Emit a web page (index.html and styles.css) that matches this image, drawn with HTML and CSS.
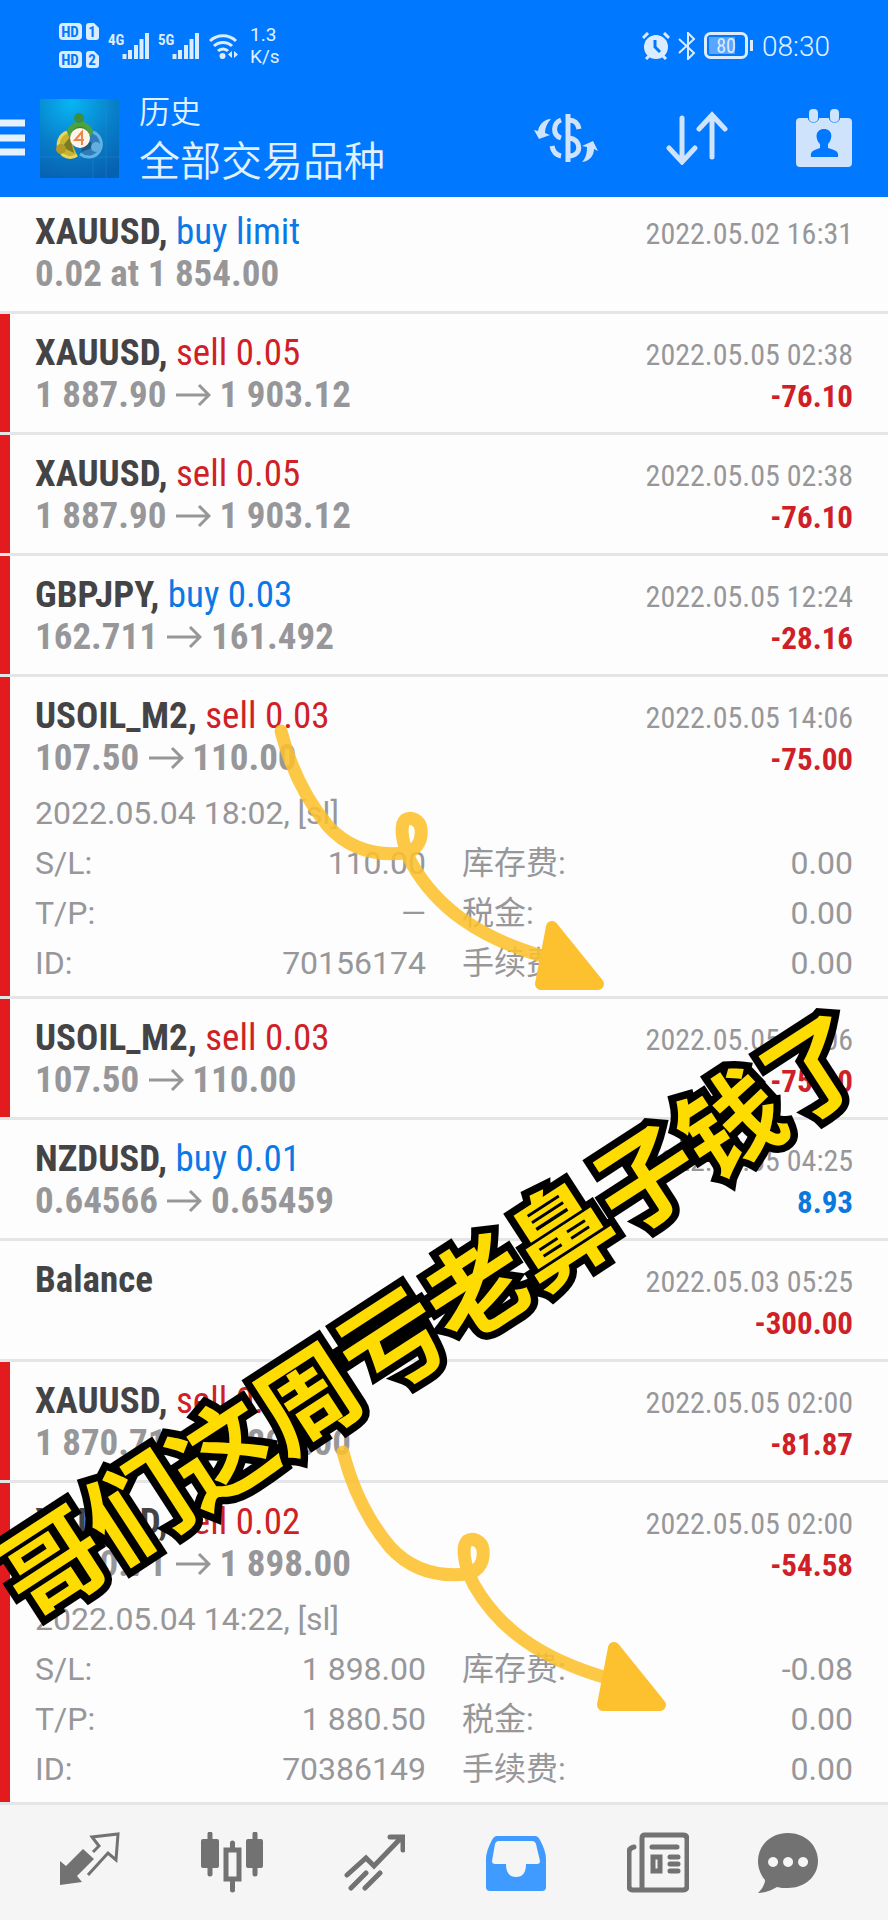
FILE: index.html
```html
<!DOCTYPE html>
<html lang="zh-CN">
<head>
<meta charset="utf-8">
<meta name="viewport" content="width=device-width, initial-scale=1">
<title>历史 - 全部交易品种</title>
<link rel="stylesheet" href="styles.css">
</head>
<body>
<div class="page">
  <header class="top">
    <div class="status">
      <svg class="status-hd" viewBox="0 0 42 48" aria-hidden="true">
        <rect x="1" y="1" width="23" height="17" rx="4"/><path d="M31 1h5l5 5v9a3 3 0 0 1-3 3h-7a3 3 0 0 1-3-3V4a3 3 0 0 1 3-3z"/>
        <rect x="1" y="29" width="23" height="17" rx="4"/><path d="M31 29h5l5 5v9a3 3 0 0 1-3 3h-7a3 3 0 0 1-3-3V32a3 3 0 0 1 3-3z"/>
        <text x="12" y="15">HD</text><text x="34" y="15">1</text>
        <text x="12" y="43">HD</text><text x="34" y="43">2</text>
      </svg>
      <svg class="status-signal" viewBox="0 0 42 30" aria-hidden="true">
        <text x="0" y="14">4G</text>
        <path d="M16.500 28v-5M22 28v-9M28 28v-14M33.500 28v-20M39 28V2"/>
      </svg>
      <svg class="status-signal" viewBox="0 0 42 30" aria-hidden="true">
        <text x="0" y="14">5G</text>
        <path d="M16.500 28v-5M22 28v-9M28 28v-14M33.500 28v-20M39 28V2"/>
      </svg>
      <svg class="status-wifi" viewBox="0 0 32 28" aria-hidden="true">
        <path d="M2 9a19 19 0 0 1 26 0M6 14a13 13 0 0 1 18 0M10 19a7 7 0 0 1 10 0"/>
        <circle cx="14.500" cy="24" r="3"/><path class="solid" d="M24 19v7l-4-3.500zM26 19v7l4-3.500z"/>
      </svg>
      <span class="speed">1.3<br>K/s</span>
      <span class="spacer"></span>
      <svg class="status-alarm" viewBox="0 0 28 28" aria-hidden="true">
        <circle class="solid" cx="14" cy="15" r="12"/>
        <path d="M1 6l5-5M27 6l-5-5M4 27l4-4M24 27l-4-4"/><path class="hand" d="M13 8v7l5 5"/>
      </svg>
      <svg class="status-bt" viewBox="0 0 18 28" aria-hidden="true"><path d="M1 7l15 14-6 6V1l6 6L1 21"/></svg>
      <svg class="status-battery" viewBox="0 0 50 28" aria-hidden="true">
        <rect x="1.500" y="1.500" width="41" height="24" rx="5"/><rect class="level" x="5" y="5" width="26" height="17"/>
        <path d="M47.500 8v11"/><text x="22" y="21">80</text>
      </svg>
      <time class="clock">08:30</time>
    </div>
    <div class="bar">
      <button class="icon-btn" aria-label="菜单">
        <svg class="i-menu" viewBox="0 0 25 38"><path d="M0 4h25M0 19h25M0 33h25"/></svg>
      </button>
      <svg class="logo" viewBox="0 0 79 79" role="img" aria-label="MetaTrader 4">
        <defs>
          <radialGradient id="sky" cx=".4" cy=".05" r="1"><stop offset="0" stop-color="#08b5f3"/><stop offset=".55" stop-color="#087fc9"/><stop offset="1" stop-color="#0761b2"/></radialGradient>
        </defs>
        <rect width="79" height="79" fill="url(#sky)"/>
        <path d="M0 58h79M53 20v59M66 0v79" stroke="#2a8fd2" stroke-width="1" opacity=".4"/>
        <path d="M29 36a11 11 0 1 1 22 0l-3 5H32z" fill="#328b35" stroke="#4da23f" stroke-width="5"/>
        <path d="M27 33c-8 3-11 12-7 19 3 6 11 9 17 4" fill="#c9b332" stroke="#e6d65b" stroke-width="3"/>
        <path d="M53 33c8 3 10 12 7 18-4 8-13 9-20 4" fill="#2d7dbb" stroke="#63b2e4" stroke-width="3"/>
        <path d="M22 48l8-10 4 16z" fill="#7d7a22"/><path d="M55 48l-9-10-5 15z" fill="#195b83"/>
        <circle cx="39" cy="19" r="5" fill="#3b8f41"/><circle cx="21" cy="50" r="5" fill="#b49b28"/><circle cx="56" cy="48" r="5" fill="#63aee0"/>
        <circle cx="40" cy="39" r="10" fill="#fff3ec"/>
        <path d="M42 46V33l-7 8h9" fill="none" stroke="#ee8647" stroke-width="2"/>
      </svg>
      <h1 class="titles"><span class="title-small">历史</span><span class="title-main">全部交易品种</span></h1>
      <div class="actions">
        <button class="icon-btn" aria-label="货币">
          <svg class="i-currency" viewBox="0 0 64 50">
            <path d="M34 1v48M27 7c-8 3-9 15 0 18M18 33c1 5 4 9 9 10M35 7c5 0 9 3 10 9M35 25c13 1 13 18 0 18"/>
            <path class="solid" d="M17 6C10 6 5 12 4 18L0 17l5 9 11-4-5-2c0-5 2-10 6-14zM48 49c8-1 12-7 12-13l4 2-5-10-11 5 5 1c0 6-1 11-5 15z"/>
          </svg>
        </button>
        <button class="icon-btn" aria-label="排序">
          <svg class="i-sort" viewBox="0 0 62 54"><path d="M16 7v43M3 37l13 14 13-14M46 46V4M33 18L46 4l13 14"/></svg>
        </button>
        <button class="icon-btn" aria-label="时间段">
          <svg class="i-calendar" viewBox="0 0 56 58">
            <path fill-rule="evenodd" d="M4 9h8v1a6 6 0 0 0 11 0V9h10v1a6 6 0 0 0 11 0V9h8a4 4 0 0 1 4 4v41a4 4 0 0 1-4 4H4a4 4 0 0 1-4-4V13a4 4 0 0 1 4-4zM15 48h27c1-6-3-7-10-9v-4c5-5 5-15-4-15s-9 10-4 15v4c-6 2-10 3-9 9z"/>
            <rect x="13" y="0" width="9" height="13" rx="4"/><rect x="34" y="0" width="9" height="13" rx="4"/>
          </svg>
        </button>
      </div>
    </div>
  </header>

  <svg class="defs" width="0" height="0" aria-hidden="true">
    <symbol id="to" viewBox="0 0 36 24"><path d="M1 12h33M24 2l10 10-10 10" fill="none" stroke="currentColor" stroke-width="3"/></symbol>
  </svg>

  <main class="deals">
    <article class="deal first">
      <div class="line"><h2 class="name">XAUUSD, <span class="buy">buy limit</span></h2><time class="date">2022.05.02 16:31</time></div>
      <div class="line"><span class="price">0.02 at 1 854.00</span></div>
    </article>
    <article class="deal loss">
      <div class="line"><h2 class="name">XAUUSD, <span class="sell">sell 0.05</span></h2><time class="date">2022.05.05 02:38</time></div>
      <div class="line"><span class="price">1 887.90 <svg class="to"><use href="#to"/></svg> 1 903.12</span><span class="profit">-76.10</span></div>
    </article>
    <article class="deal loss">
      <div class="line"><h2 class="name">XAUUSD, <span class="sell">sell 0.05</span></h2><time class="date">2022.05.05 02:38</time></div>
      <div class="line"><span class="price">1 887.90 <svg class="to"><use href="#to"/></svg> 1 903.12</span><span class="profit">-76.10</span></div>
    </article>
    <article class="deal loss">
      <div class="line"><h2 class="name">GBPJPY, <span class="buy">buy 0.03</span></h2><time class="date">2022.05.05 12:24</time></div>
      <div class="line"><span class="price">162.711 <svg class="to"><use href="#to"/></svg> 161.492</span><span class="profit">-28.16</span></div>
    </article>
    <article class="deal loss open">
      <div class="line"><h2 class="name">USOIL_M2, <span class="sell">sell 0.03</span></h2><time class="date">2022.05.05 14:06</time></div>
      <div class="line"><span class="price">107.50 <svg class="to"><use href="#to"/></svg> 110.00</span><span class="profit">-75.00</span></div>
      <div class="details">
        <p class="opened">2022.05.04 18:02, [sl]</p>
        <dl class="facts">
          <div><dt>S/L:</dt><dd>110.00</dd></div><div><dt>库存费:</dt><dd>0.00</dd></div>
          <div><dt>T/P:</dt><dd>—</dd></div><div><dt>税金:</dt><dd>0.00</dd></div>
          <div><dt>ID:</dt><dd>70156174</dd></div><div><dt>手续费:</dt><dd>0.00</dd></div>
        </dl>
      </div>
    </article>
    <article class="deal loss">
      <div class="line"><h2 class="name">USOIL_M2, <span class="sell">sell 0.03</span></h2><time class="date">2022.05.05 14:06</time></div>
      <div class="line"><span class="price">107.50 <svg class="to"><use href="#to"/></svg> 110.00</span><span class="profit">-75.00</span></div>
    </article>
    <article class="deal">
      <div class="line"><h2 class="name">NZDUSD, <span class="buy">buy 0.01</span></h2><time class="date">2022.05.05 04:25</time></div>
      <div class="line"><span class="price">0.64566 <svg class="to"><use href="#to"/></svg> 0.65459</span><span class="profit gain">8.93</span></div>
    </article>
    <article class="deal">
      <div class="line"><h2 class="name">Balance</h2><time class="date">2022.05.03 05:25</time></div>
      <div class="line"><span class="price">&nbsp;</span><span class="profit">-300.00</span></div>
    </article>
    <article class="deal loss">
      <div class="line"><h2 class="name">XAUUSD, <span class="sell">sell 0.03</span></h2><time class="date">2022.05.05 02:00</time></div>
      <div class="line"><span class="price">1 870.71 <svg class="to"><use href="#to"/></svg> 1 898.00</span><span class="profit">-81.87</span></div>
    </article>
    <article class="deal loss open">
      <div class="line"><h2 class="name">XAUUSD, <span class="sell">sell 0.02</span></h2><time class="date">2022.05.05 02:00</time></div>
      <div class="line"><span class="price">1 870.71 <svg class="to"><use href="#to"/></svg> 1 898.00</span><span class="profit">-54.58</span></div>
      <div class="details">
        <p class="opened">2022.05.04 14:22, [sl]</p>
        <dl class="facts">
          <div><dt>S/L:</dt><dd>1 898.00</dd></div><div><dt>库存费:</dt><dd>-0.08</dd></div>
          <div><dt>T/P:</dt><dd>1 880.50</dd></div><div><dt>税金:</dt><dd>0.00</dd></div>
          <div><dt>ID:</dt><dd>70386149</dd></div><div><dt>手续费:</dt><dd>0.00</dd></div>
        </dl>
      </div>
    </article>
  </main>

  <nav class="tabs" aria-label="主导航">
    <button class="tab" aria-label="行情"><svg viewBox="0 0 62 62">
      <path class="solid" d="M1 29l6 5 17-17 11 10-17 17 5 6-22 3z"/>
      <path d="M34 19l6-6-7-9 26-3-2 26-8-7-20 22" transform="translate(0 1)"/>
    </svg></button>
    <button class="tab" aria-label="图表"><svg viewBox="0 0 62 62">
      <rect class="solid" x="0" y="7" width="18" height="29" rx="2"/><rect class="solid" x="45" y="7" width="17" height="29" rx="2"/>
      <path class="thick" d="M9 2v40M54 2v40M31.500 11v7M31.500 48v10M25 18h13v29H25z"/>
    </svg></button>
    <button class="tab" aria-label="交易"><svg viewBox="0 0 62 62">
      <path class="thick" d="M4 43l19-17 8 8L58 6M47 5h13v13M8 56l15-15M22 56l15-15"/>
    </svg></button>
    <button class="tab active" aria-label="历史"><svg viewBox="0 0 62 62">
      <path class="solid" fill-rule="evenodd" d="M12 4h38q3 0 5 4 6 11 6 19v28q0 4-4 4H5q-4 0-4-4V27Q1 19 7 8q2-4 5-4zm2 5q-3 0-4 3L7 29q0 3 3 3h11q0 13 10 13t10-13h11q3 0 3-3l-4-17q-1-3-4-3z"/>
    </svg></button>
    <button class="tab" aria-label="新闻"><svg viewBox="0 0 62 62">
      <path class="thick" d="M15 58V6q0-3 3-3h38q4 0 4 4v47q0 4-4 4H6q-4 0-4-4V20q0-4 5-5M25 15h25M43 25h8M43 32h8M43 39h8"/>
      <path class="thick" d="M26 25h7v14h-7z"/>
    </svg></button>
    <button class="tab" aria-label="消息"><svg viewBox="0 0 62 62">
      <path class="solid" fill-rule="evenodd" d="M31 1c17 0 30 12 30 28S47 56 31 56c-4 0-8 0-11-1-5 3-12 6-19 6 4-4 7-9 7-13C4 43 1 37 1 29 1 13 14 1 31 1zM16 25a5 5 0 1 0 .1 0zM31 25a5 5 0 1 0 .1 0zM46 25a5 5 0 1 0 .1 0z"/>
    </svg></button>
  </nav>

  <svg class="scribbles" viewBox="0 0 888 1920" aria-hidden="true">
    <g id="swoop">
      <path class="tail" d="M281 731C289 762 303 796 328 826C350 850 378 856 405 853C419 850 422 838 421 829C420 820 411 816 405 820C400 825 401 843 412 864C436 906 476 937 545 957"/>
      <path class="head" d="M552 927L541 984L598 984Z"/>
    </g>
    <use href="#swoop" x="62" y="721"/>
  </svg>
  <p class="caption">哥们这周亏老鼻子钱了</p>
</div>
</body>
</html>
```

FILE: styles.css
```css
* { box-sizing: border-box; }

body {
  margin: 0;
  background: #fdfdfd;
  font-family: Roboto, "Noto Sans CJK SC", sans-serif;
  color: #97979a;
}

h1, h2, p, dl, dd { margin: 0; font-weight: 400; }

button { border: 0; padding: 0; background: none; color: inherit; font: inherit; }

svg { display: block; }

.defs { position: absolute; }

.page {
  position: relative;
  display: flex;
  flex-direction: column;
  min-height: 100vh;
  overflow: hidden;
}

/* Header */

.top {
  background: #0078ff;
  color: #e2f1ff;
  height: 197px;
}

.status {
  display: flex;
  align-items: center;
  gap: 8px;
  height: 92px;
  padding: 0 58px;
}

.status svg { flex: none; fill: none; stroke: #dcecff; stroke-width: 3; }
.status .solid { fill: #dcecff; stroke: none; }
.status text { stroke: none; fill: #dcecff; font-family: "Roboto Condensed", "Liberation Sans Narrow", Roboto, sans-serif; font-weight: 700; }

.status .status-hd { width: 42px; height: 48px; fill: #dcecff; stroke: none; }
.status .status-hd text { fill: #0078ff; font-size: 15px; text-anchor: middle; }
.status .status-signal { width: 42px; height: 30px; stroke-width: 4; }
.status .status-signal text { font-size: 15px; }
.status .status-wifi { width: 32px; height: 28px; }
.status-wifi circle { fill: #dcecff; stroke: none; }
.status .status-alarm { width: 28px; height: 28px; }
.status-alarm .hand { stroke: #0078ff; }
.status .status-bt { width: 18px; height: 28px; stroke-width: 2; }
.status .status-battery { width: 50px; height: 28px; stroke-width: 3; }
.status-battery .level { fill: #5aa6ff; stroke: none; }
.status .status-battery text { font-size: 20px; font-weight: 400; text-anchor: middle; }

.speed { padding-left: 2px; font-size: 19px; line-height: 22px; }
.spacer { flex: 1; }
.clock { font-size: 28px; font-weight: 300; }

.bar {
  display: flex;
  align-items: center;
  height: 92px;
  padding-right: 36px;
}

.icon-btn svg { fill: none; stroke: #cfe3fc; stroke-width: 6; }
.icon-btn .solid { fill: #cfe3fc; stroke: none; }
.icon-btn .i-menu { width: 25px; height: 38px; stroke: #e6f1ff; stroke-width: 7; }
.icon-btn .i-currency { width: 64px; height: 50px; stroke-width: 5; }
.icon-btn .i-sort { width: 62px; height: 54px; stroke-width: 5; stroke-linecap: round; }
.icon-btn .i-calendar { width: 56px; height: 58px; fill: #cfe3fc; stroke: none; }

.logo { width: 79px; height: 79px; margin: 0 20px 0 15px; }

.titles {
  display: flex;
  flex-direction: column;
  gap: 2px;
  padding-top: 4px;
  font-weight: 350;
}

.title-small { font-size: 31px; line-height: 42px; }
.title-main { font-size: 41px; line-height: 52px; }

.actions {
  flex: 1;
  display: flex;
  align-items: center;
  justify-content: flex-end;
  gap: 68px;
}

/* Deal list */

.deals { flex: 1; }

.deal {
  padding: 18px 35px 16px;
  border-bottom: 3px solid #e4e5e7;
}

.deal.first { padding-top: 14px; }
.deal.loss { box-shadow: inset 10px 0 #e31b1e; }
.deal.open { padding-bottom: 8px; }

.line {
  display: flex;
  justify-content: space-between;
  align-items: baseline;
  height: 42px;
  line-height: 42px;
  font-family: "Roboto Condensed", "Liberation Sans Narrow", Roboto, sans-serif;
  white-space: nowrap;
}

.name { font-size: 37px; font-weight: 700; color: #444446; }
.name span { font-weight: 400; }
.buy { color: #0a78e6; }
.sell { color: #d01f26; }
.price { font-size: 37px; font-weight: 700; }
.date { font-size: 30px; }
.profit { font-size: 31px; font-weight: 700; color: #cf2027; }
.profit.gain { color: #0a78dc; }
.to { display: inline-block; width: 36px; height: 24px; }

.details {
  margin-top: 9px;
  font-size: 32px;
  font-weight: 300;
  line-height: 50px;
}

.opened { height: 50px; }

.facts {
  display: grid;
  grid-template-columns: 1fr 1fr;
  column-gap: 36px;
}

.facts div { display: flex; justify-content: space-between; height: 50px; }

/* Bottom tabs */

.tabs {
  display: grid;
  grid-template-columns: repeat(5, 142fr) 118fr;
  height: 116px;
  padding: 0 41px 0 19px;
  background: #f5f5f5;
  color: #727272;
}

.tab { display: grid; place-items: center; }
.tab.active { color: #3f9bff; }
.tab svg { width: 62px; height: 62px; fill: none; stroke: currentColor; stroke-width: 3; }
.tab .solid { fill: currentColor; stroke: none; }
.tab .thick { stroke-width: 5; stroke-linecap: round; }

/* Hand-drawn marks and slanted caption lying over the list */

.scribbles { position: absolute; top: 0; left: 0; width: 100%; pointer-events: none; }
.tail { fill: none; stroke: #fcc02c; stroke-width: 13; stroke-linecap: round; opacity: .88; }
.head { fill: #fdc02f; stroke: #fdc02f; stroke-width: 12; stroke-linejoin: round; }

.caption {
  position: absolute;
  top: 1311px;
  left: 431px;
  translate: -50% -50%;
  rotate: -33deg;
  font-family: "Noto Sans CJK SC", sans-serif;
  font-size: 101px;
  font-weight: 700;
  line-height: 1;
  white-space: nowrap;
  color: #ffdc00;
  -webkit-text-stroke: 15px #000;
  paint-order: stroke fill;
  stroke-linejoin: round;
  pointer-events: none;
}
```
